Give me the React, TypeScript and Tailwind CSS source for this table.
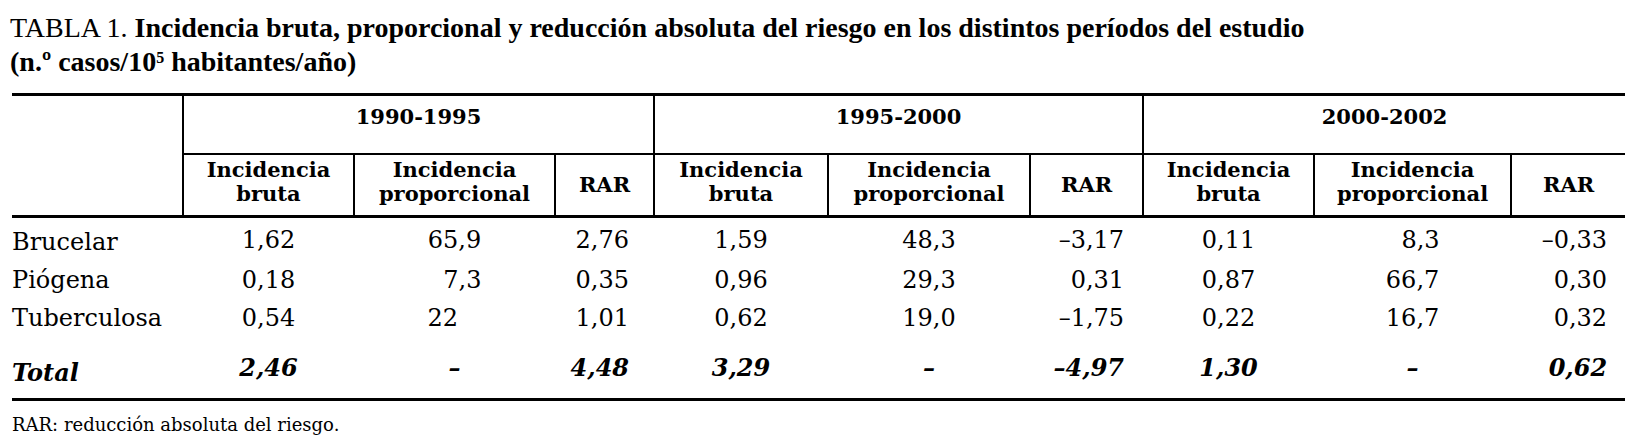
const COLS = [171, 171, 201, 99, 174, 202, 113, 171, 197, 114];

type Cell = [string, "c" | "l" | "r"];

const ROWS: { name: string; cells: Cell[] }[] = [
  {
    name: "Brucelar",
    cells: [["1,62", "c"], ["65,9", "c"], ["2,76", "c"], ["1,59", "c"], ["48,3", "c"], ["–3,17", "c"], ["0,11", "c"], ["8,3", "r"], ["–0,33", "c"]],
  },
  {
    name: "Piógena",
    cells: [["0,18", "c"], ["7,3", "r"], ["0,35", "c"], ["0,96", "c"], ["29,3", "c"], ["0,31", "c"], ["0,87", "c"], ["66,7", "c"], ["0,30", "c"]],
  },
  {
    name: "Tuberculosa",
    cells: [["0,54", "c"], ["22", "l"], ["1,01", "c"], ["0,62", "c"], ["19,0", "c"], ["–1,75", "c"], ["0,22", "c"], ["16,7", "c"], ["0,32", "c"]],
  },
];

const TOTAL = ["2,46", "–", "4,48", "3,29", "–", "–4,97", "1,30", "–", "0,62"];

// padding for the RAR columns (right aligned)
const RAR_PAD = ["pr-[25px]", "pr-[19px]", "pr-[18px]"];

function Value({ v, align, col }: { v: string; align: "c" | "l" | "r"; col: number }) {
  const kind = col % 3;
  if (kind === 2) {
    return <td className={`text-right ${RAR_PAD[Math.floor(col / 3)]}`}>{v}</td>;
  }
  if (kind === 1) {
    return (
      <td className="text-center">
        <span className={`inline-block w-[54px] ${align === "r" ? "text-right" : align === "l" ? "text-left" : "text-center"}`}>{v}</span>
      </td>
    );
  }
  return <td className="text-center">{v}</td>;
}

const PERIODS = ["1990-1995", "1995-2000", "2000-2002"];

export default function App() {
  return (
    <div className="w-[1644px] h-[441px] bg-white text-black overflow-hidden font-['DejaVu_Serif',serif]">
      {/* Title */}
      <div className="pl-[10px] pt-[11px] leading-[34px] text-[28px] whitespace-nowrap font-['Liberation_Serif',serif]">
        <div>
          <span className="font-normal">TABLA 1.</span>{" "}
          <span className="font-bold">
            Incidencia bruta, proporcional y reducción absoluta del riesgo en los distintos períodos del estudio
          </span>
        </div>
        <div className="font-bold">
          (n.º casos/10<sup className="text-[16px]">5</sup> habitantes/año)
        </div>
      </div>

      <table className="ml-[12px] mt-[14px] border-collapse table-fixed w-[1613px] text-[24px] leading-[38px]">
        <colgroup>
          {COLS.map((w, i) => (
            <col key={i} style={{ width: w }} />
          ))}
        </colgroup>
        <thead className="font-bold text-[21px] leading-[24px]">
          <tr className="border-t-[3px] border-black">
            <th rowSpan={2} className="border-b-[3px] border-black" />
            {PERIODS.map((p) => (
              <th key={p} colSpan={3} className="h-[59px] pb-[14px] text-center border-l-2 border-b-2 border-black font-bold">
                {p}
              </th>
            ))}
          </tr>
          <tr className="border-b-[3px] border-black">
            {PERIODS.map((p) => [
              <th key={p + "a"} className="h-[63px] pb-[6px] border-l-2 border-black font-bold">
                Incidencia
                <br />
                bruta
              </th>,
              <th key={p + "b"} className="pb-[6px] border-l-2 border-black font-bold">
                Incidencia
                <br />
                proporcional
              </th>,
              <th key={p + "c"} className="border-l-2 border-black font-bold">
                RAR
              </th>,
            ])}
          </tr>
        </thead>
        <tbody>
          {ROWS.map((r, ri) => (
            <tr key={r.name}>
              <td className={`text-left ${ri === 0 ? "pt-[5px]" : ""}`}>{r.name}</td>
              {r.cells.map(([v, a], ci) => (
                <Value key={ci} v={v} align={a} col={ci} />
              ))}
            </tr>
          ))}
          <tr className="border-b-[3px] border-black font-bold italic">
            <td className="text-left pt-[17px] pb-[6px]">Total</td>
            {TOTAL.map((v, ci) => (
              <Value key={ci} v={v} align="c" col={ci} />
            ))}
          </tr>
        </tbody>
      </table>

      <p className="pl-[12px] mt-[9px] text-[18px] leading-[30px]">RAR: reducción absoluta del riesgo.</p>
    </div>
  );
}
